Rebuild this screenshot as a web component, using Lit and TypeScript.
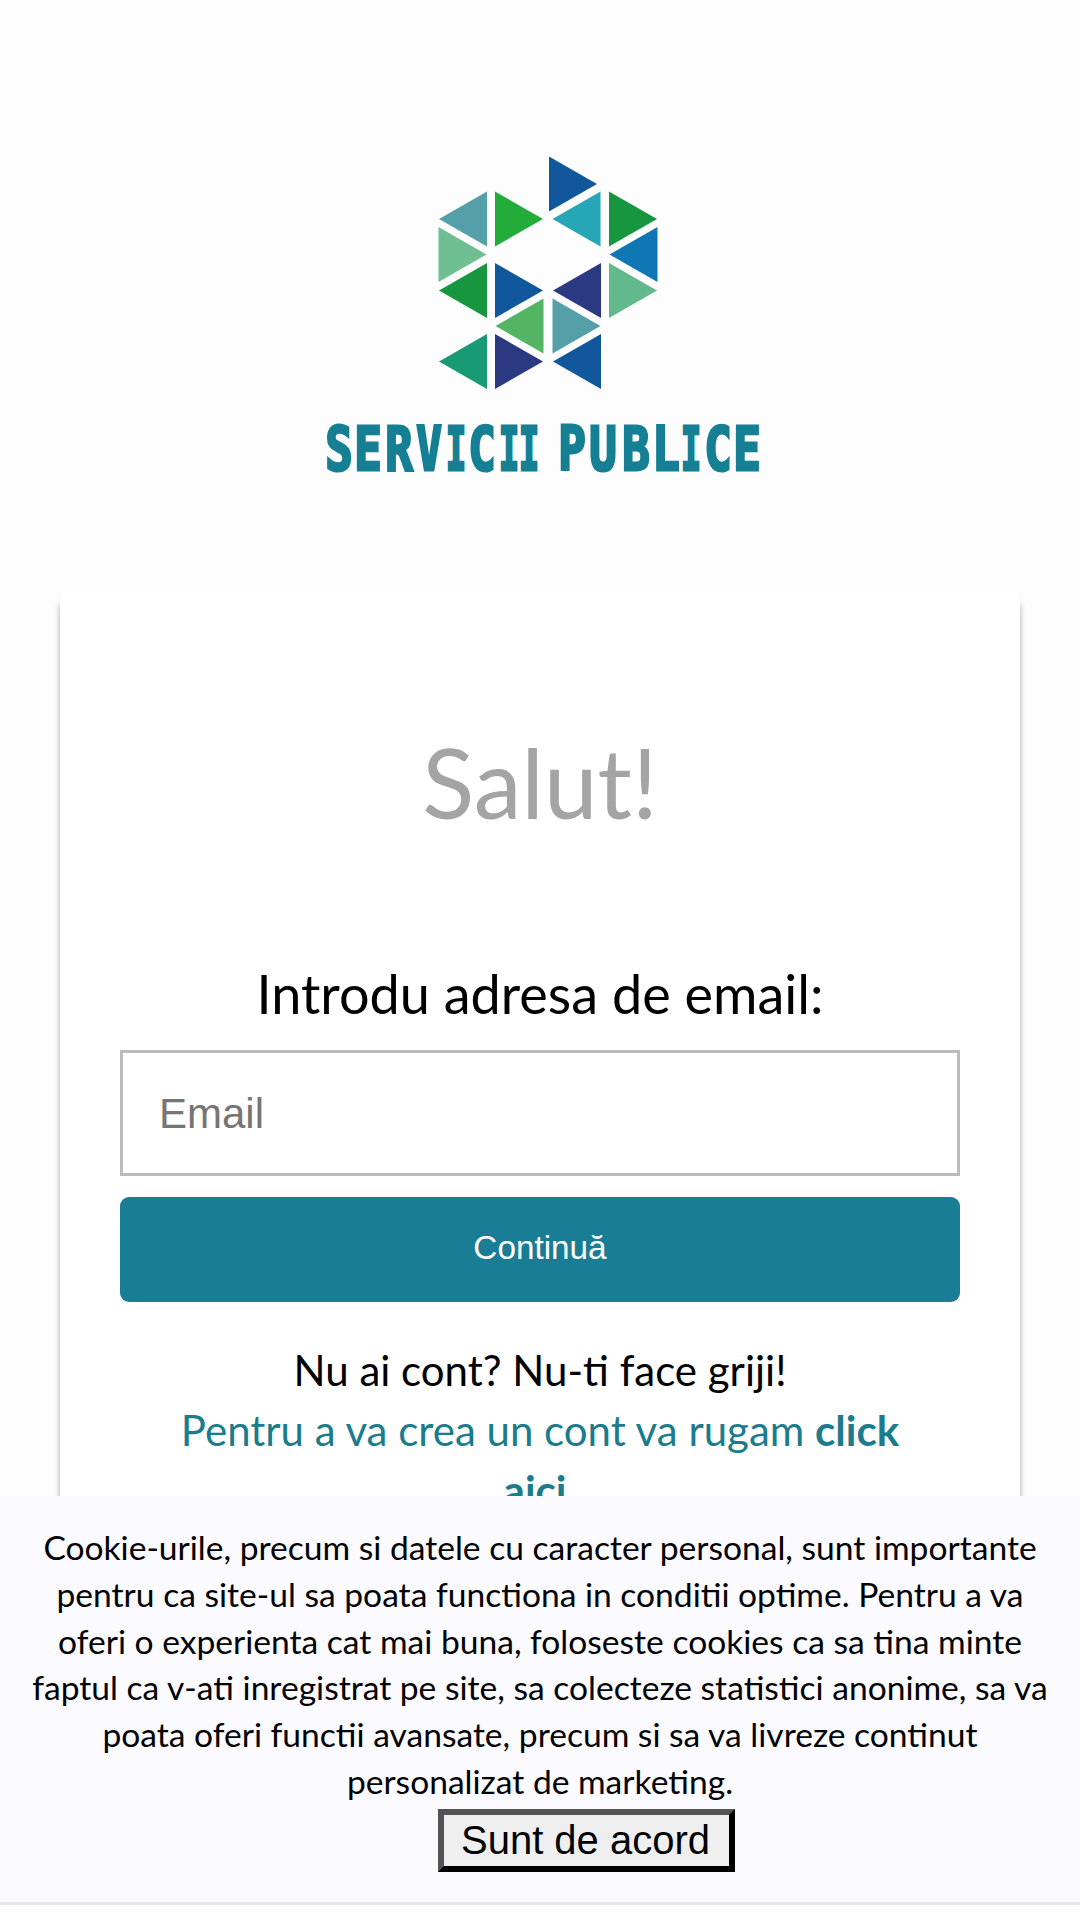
import { LitElement, html, svg, css, TemplateResult } from 'lit';
import { customElement } from 'lit/decorators.js';

type Triangle = {
  x: number;
  y: number;
  dir: 'left' | 'right';
  color: string;
};

// x is the vertical edge of a triangle, y is its tip
const TRIANGLES: Triangle[] = [
  { x: 129, y: 44, dir: 'right', color: '#11579b' },
  { x: 67, y: 79, dir: 'left', color: '#559fa9' },
  { x: 75, y: 79, dir: 'right', color: '#24ac3a' },
  { x: 180.5, y: 79, dir: 'left', color: '#27a6b7' },
  { x: 189, y: 79, dir: 'right', color: '#17963f' },
  { x: 18.5, y: 114.5, dir: 'right', color: '#6fbf93' },
  { x: 237.5, y: 114.5, dir: 'left', color: '#0f78b4' },
  { x: 67, y: 150.5, dir: 'left', color: '#17963f' },
  { x: 75, y: 150.5, dir: 'right', color: '#11579b' },
  { x: 181, y: 150.5, dir: 'left', color: '#2b3983' },
  { x: 189, y: 150.5, dir: 'right', color: '#61b98c' },
  { x: 123.5, y: 186, dir: 'left', color: '#53b563' },
  { x: 132.5, y: 186, dir: 'right', color: '#559fa9' },
  { x: 67, y: 221.5, dir: 'left', color: '#189a74' },
  { x: 75, y: 221.5, dir: 'right', color: '#2b3983' },
  { x: 181, y: 221.5, dir: 'left', color: '#11579b' },
];

@customElement('sp-logo')
export class SpLogo extends LitElement {
  static styles = css`
    :host {
      display: block;
      width: 460px;
      height: 350px;
    }

    svg {
      display: block;
    }

    .name {
      font-family: 'DejaVu Sans Mono', monospace;
      font-weight: 700;
      font-size: 61px;
      fill: #157f94;
      stroke: #157f94;
      stroke-width: 3px;
      text-anchor: middle;
    }
  `;

  renderTriangle({ x, y, dir, color }: Triangle): TemplateResult {
    const tip = dir === 'right' ? x + 48 : x - 48;
    return svg`<polygon
      points="${x},${y - 27.5} ${tip},${y} ${x},${y + 27.5}"
      fill=${color}
    />` as TemplateResult;
  }

  renderName() {
    const centers = [
      29, 58, 89, 119, 146, 172, 199, 219, 0, 262, 293, 326, 356, 381, 408, 437,
    ];
    return [...'SERVICII PUBLICE'].map((char, i) => {
      const scale = char === 'I' ? 0.56 : char === 'V' ? 0.7 : 0.75;
      return char === ' '
        ? svg`<tspan> </tspan>`
        : svg`<text class="name" transform="translate(${centers[i]} 329.5) scale(${scale} 1)">${char}</text>`;
    });
  }

  render(): TemplateResult {
    return html`
      <svg width="460" height="350" viewBox="0 0 460 350">
        <g transform="translate(110 0)">
          ${TRIANGLES.map((t) => this.renderTriangle(t))}
        </g>
        ${this.renderName()}
      </svg>
    `;
  }
}

@customElement('sp-login-card')
export class SpLoginCard extends LitElement {
  static styles = css`
    :host {
      display: block;
      box-sizing: border-box;
      height: 1100px;
      padding: 130px 60px 0;
      border-radius: 6px;
      background: #fff;
      box-shadow: 0 10px 6px rgba(0, 0, 0, 0.32);
      text-align: center;
    }

    h1 {
      margin: 0;
      font-size: 96px;
      font-weight: 400;
      line-height: 120px;
      color: #a4a4a4;
    }

    label {
      display: block;
      margin-top: 119px;
      font-size: 54px;
      line-height: 66px;
    }

    input {
      display: block;
      box-sizing: border-box;
      width: 100%;
      height: 126px;
      margin: 23px 0 21px;
      padding: 2px 36px 0;
      border: 3px solid #bbb;
      font: 42px 'Liberation Sans', Arial, sans-serif;
    }

    input::placeholder {
      color: #757575;
    }

    button {
      display: block;
      width: 100%;
      height: 105px;
      padding: 0 0 3px;
      border: 0;
      border-radius: 9px;
      background: #1a7d96;
      color: #fff;
      font: 33.3px 'Liberation Sans', Arial, sans-serif;
    }

    p {
      margin: 38px 48px 0;
      font-size: 42px;
      line-height: 60px;
    }

    a {
      color: #1a7c8c;
    }
  `;

  render(): TemplateResult {
    return html`
      <h1>Salut!</h1>
      <label for="email">Introdu adresa de email:</label>
      <input id="email" type="email" placeholder="Email" />
      <button>Continuă</button>
      <p>
        Nu ai cont? Nu-ti face griji!<br />
        <a>Pentru a va crea un cont va rugam <b>click aici</b>.</a>
      </p>
    `;
  }
}

@customElement('sp-cookie-bar')
export class SpCookieBar extends LitElement {
  static styles = css`
    :host {
      display: block;
      box-sizing: border-box;
      height: 409px;
      padding: 28px 0 0;
      border-bottom: 3px solid #e6e6ee;
      background: #fafaff;
      text-align: center;
    }

    p {
      margin: 0;
      font-size: 33.6px;
      line-height: 46.8px;
    }

    button {
      display: block;
      box-sizing: border-box;
      width: 297px;
      height: 63px;
      margin: 4.2px 0 0 438px;
      padding: 0 2px 0 0;
      border: 6px outset #000;
      background: #efefef;
      color: #000;
      font: 40px 'Liberation Sans', Arial, sans-serif;
    }
  `;

  render(): TemplateResult {
    return html`
      <p>
        Cookie-urile, precum si datele cu caracter personal, sunt importante<br />
        pentru ca site-ul sa poata functiona in conditii optime. Pentru a va<br />
        oferi o experienta cat mai buna, foloseste cookies ca sa tina minte<br />
        faptul ca v-ati inregistrat pe site, sa colecteze statistici anonime, sa va<br />
        poata oferi functii avansate, precum si sa va livreze continut<br />
        personalizat de marketing.
      </p>
      <button>Sunt de acord</button>
    `;
  }
}

@customElement('app-root')
export class AppRoot extends LitElement {
  static styles = css`
    :host {
      display: block;
      position: relative;
      height: 1920px;
      overflow: hidden;
      background: #fdfdfd;
      color: #000;
      font-family: Lato, sans-serif;
    }

    main {
      display: flex;
      flex-direction: column;
      padding: 140px 60px 0;
    }

    sp-logo {
      margin: 0 0 102px 250px;
    }

    .consent {
      position: absolute;
      left: 0;
      right: 0;
      bottom: 0;
      height: 424px;
      background: #fff;
    }
  `;

  render(): TemplateResult {
    return html`
      <main>
        <sp-logo></sp-logo>
        <sp-login-card></sp-login-card>
      </main>
      <div class="consent">
        <sp-cookie-bar></sp-cookie-bar>
      </div>
    `;
  }
}

declare global {
  interface HTMLElementTagNameMap {
    'app-root': AppRoot;
    'sp-logo': SpLogo;
    'sp-login-card': SpLoginCard;
    'sp-cookie-bar': SpCookieBar;
  }
}
